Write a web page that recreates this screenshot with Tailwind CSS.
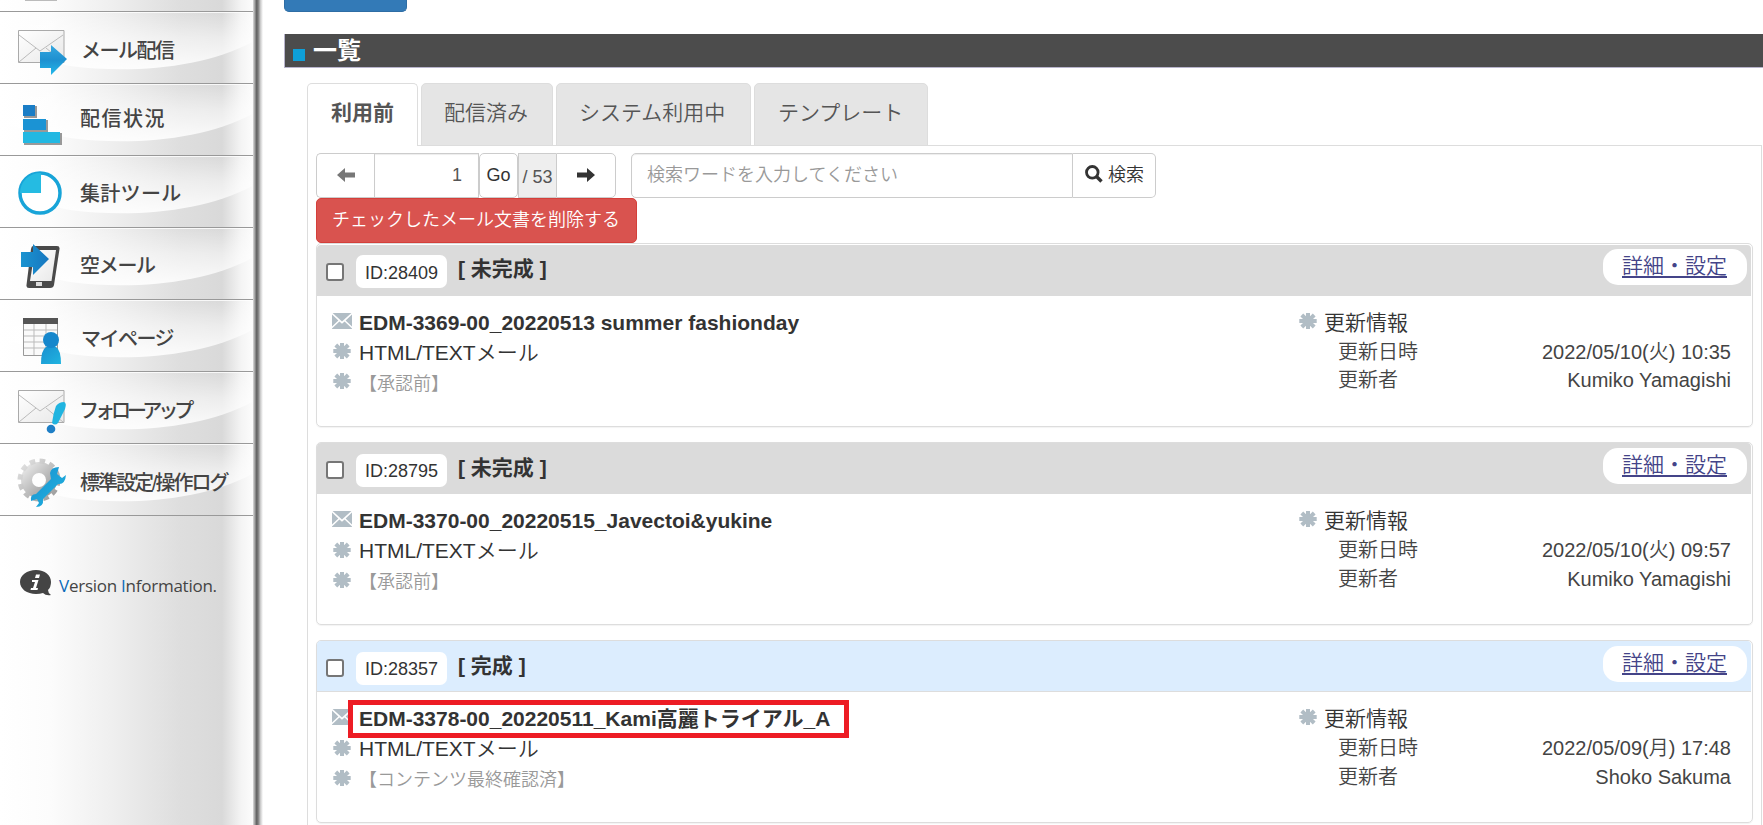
<!DOCTYPE html>
<html lang="ja">
<head>
<meta charset="utf-8">
<title>一覧</title>
<script src="https://cdn.jsdelivr.net/npm/@tailwindcss/browser@4"></script>
</head>
<body class="bg-white text-[#333] font-['Liberation_Sans','Noto_Sans_CJK_JP',sans-serif] overflow-hidden">
<svg width="0" height="0" class="absolute">
  <defs>
    <linearGradient id="blue" x1="0" y1="0" x2="0" y2="1"><stop offset="0" stop-color="#35a8e0"/><stop offset=".5" stop-color="#1e90d0"/><stop offset="1" stop-color="#22b8ea"/></linearGradient>
    <linearGradient id="deep" x1="0" y1="0" x2="1" y2="0"><stop offset="0" stop-color="#1b93d0"/><stop offset="1" stop-color="#1677c0"/></linearGradient>
    <linearGradient id="teal" x1="0" y1="0" x2="1" y2="1"><stop offset="0" stop-color="#1a90d0"/><stop offset="1" stop-color="#20b4e0"/></linearGradient>
    <linearGradient id="paper" x1="0" y1="0" x2="1" y2="1"><stop offset="0" stop-color="#fff"/><stop offset="1" stop-color="#e8e8e8"/></linearGradient>
    <linearGradient id="steel" x1="0" y1="0" x2="1" y2="1"><stop offset="0" stop-color="#e4e4e4"/><stop offset="1" stop-color="#999"/></linearGradient>
    <linearGradient id="glow" x1="0" y1="0" x2="0" y2="1"><stop offset="0" stop-color="#fff" stop-opacity="0"/><stop offset=".45" stop-color="#fff" stop-opacity=".5"/><stop offset="1" stop-color="#fff" stop-opacity=".9"/></linearGradient>
    <symbol id="gloss" viewBox="0 0 252 71"><path d="M0 0H252V30C205 56 130 62 70 54L0 40Z" fill="url(#glow)"/><path d="M0 .5H252" stroke="#fff" stroke-opacity=".8"/></symbol>
    <symbol id="ast" viewBox="0 0 18 16"><g stroke="#b1bdc5" stroke-width="4"><path d="M9 0V16M.3 8H17.700M2.800 2 15.200 14M15.200 2 2.800 14"/></g></symbol>
    <symbol id="env" viewBox="0 0 20 16"><path fill="#b1bdc5" d="M.6 0H19.400L10 8.600ZM0 1.400 6.400 7.400 0 13.600ZM20 1.400 13.600 7.400 20 13.600ZM7.400 8.400 10 10.800 12.600 8.400 20 15.400V16H0V15.400Z"/></symbol>
  </defs>
</svg>
<div class="flex h-[825px] w-[1763px]">
  <aside class="flex h-full w-[270px] shrink-0">
    <div class="h-full w-[253px] bg-[linear-gradient(90deg,#fff_0,#fcfcfc_50px,#eee_115px,#dedede_180px,#d9d9d9_222px,#f4f4f4_241px,#fcfcfc_253px)]">
      <div class="relative h-[12px] border-b border-[#999]"><div class="absolute left-[25px] top-0 h-px w-8 bg-[#bbb]"></div></div>
      <nav class="text-[20px] font-medium text-[#444]">
        <a class="relative flex h-[72px] items-center border-b border-[#999]"><svg class="absolute left-0 top-0" width="252" height="71"><use href="#gloss"/></svg>
          <svg class="relative ml-[16px]" width="54" height="54" viewBox="0 0 54 54"><path d="M2.500 9.500H48V41.500H2.500Z" fill="url(#paper)" stroke="#aaa"/><path d="M3 41 20 27M47 41 30 27M3 14 24 30 47 14" fill="none" stroke="#bbb"/><path d="M24 31H35V24L51 38 35 54V47H24Z" fill="url(#blue)"/></svg>
          <span class="relative top-[3px] ml-[11px] leading-none tracking-[-1.5px]">メール配信</span></a>
        <a class="relative flex h-[72px] items-center border-b border-[#999]"><svg class="absolute left-0 top-0" width="252" height="71"><use href="#gloss"/></svg>
          <svg class="relative ml-[16px]" width="54" height="54" viewBox="0 0 54 54"><g fill="#999"><path d="M8 13H21V25H8ZM8 27H32V39H8ZM8 40H46V52H8Z"/></g><path d="M7 12H19V23H7Z" fill="#1a7dc6"/><path d="M7 26H30V37H7Z" fill="#1b93d4"/><path d="M7 39H44V50H7Z" fill="#22b8e2"/></svg>
          <span class="relative -top-px ml-[10px] leading-none tracking-[1.5px]">配信状況</span></a>
        <a class="relative flex h-[72px] items-center border-b border-[#999]"><svg class="absolute left-0 top-0" width="252" height="71"><use href="#gloss"/></svg>
          <svg class="relative ml-[16px]" width="54" height="54" viewBox="0 0 54 54"><circle cx="24" cy="28" r="20" fill="#fff" stroke="#18a4d8" stroke-width="3.500"/><path d="M25 28V8A20 20 0 0 0 4 28Z" fill="#25bbe2"/></svg>
          <span class="relative top-[2px] ml-[10px] leading-none tracking-[.3px]">集計ツール</span></a>
        <a class="relative flex h-[72px] items-center border-b border-[#999]"><svg class="absolute left-0 top-0" width="252" height="71"><use href="#gloss"/></svg>
          <svg class="relative ml-[16px]" width="54" height="54" viewBox="0 0 54 54"><path d="M17 9H41Q44 9 43.500 12L38 48Q37.500 51 34 51H13Q10 51 10.500 48L15 12Q15.500 9 17 9Z" fill="#4a4a4a"/><path d="M19 13H40L35.500 44H14Z" fill="url(#paper)"/><path d="M20 45H26V49H20Z" fill="#ddd"/><path d="M5 15H17V7L33 22 17 38V30H5Z" fill="url(#deep)"/></svg>
          <span class="relative top-[2px] ml-[10px] leading-none tracking-[-1.3px]">空メール</span></a>
        <a class="relative flex h-[72px] items-center border-b border-[#999]"><svg class="absolute left-0 top-0" width="252" height="71"><use href="#gloss"/></svg>
          <svg class="relative ml-[16px]" width="54" height="56" viewBox="0 0 54 56"><path d="M7.500 10.500H41.500V47.500H7.500Z" fill="#fafafa" stroke="#999"/><path d="M7 10H42V16H7Z" fill="#555"/><path d="M8 22H41M8 28H41M8 34H41M8 40H41M18 16V47M30 16V47" stroke="#bbb"/><path d="M25 56Q25 42 30 39H40Q45 42 45 56Z" fill="url(#teal)"/><circle cx="35" cy="32" r="8" fill="#1687cc"/></svg>
          <span class="relative top-[3px] ml-[11px] leading-none tracking-[-1.5px]">マイページ</span></a>
        <a class="relative flex h-[72px] items-center border-b border-[#999]"><svg class="absolute left-0 top-0" width="252" height="71"><use href="#gloss"/></svg>
          <svg class="relative ml-[16px]" width="54" height="54" viewBox="0 0 54 54"><path d="M2.500 9.500H48V41.500H2.500Z" fill="url(#paper)" stroke="#aaa"/><path d="M3 41 20 27M47 41 30 27M3 14 24 30 47 14" fill="none" stroke="#bbb"/><path d="M40 25Q43 21 48 21 51 22 49 28L42 42Q39 45 36 42Q37 33 40 25Z" fill="#20b4e0"/><circle cx="35" cy="48" r="4.300" fill="#1f7fc6"/></svg>
          <span class="relative top-[3px] ml-[9px] leading-none tracking-[-4px]">フォローアップ</span></a>
        <a class="relative flex h-[72px] items-center border-b border-[#999]"><svg class="absolute left-0 top-0" width="252" height="71"><use href="#gloss"/></svg>
          <svg class="relative ml-[16px]" width="54" height="54" viewBox="0 0 54 54"><circle cx="23" cy="27" r="12.500" fill="none" stroke="url(#steel)" stroke-width="11"/><circle cx="23" cy="27" r="19" fill="none" stroke="url(#steel)" stroke-width="5" stroke-dasharray="5.500 4.450"/><path d="M43 14Q35 14 34 20L35 26 20 41Q14 41 15 48L21 46 23 50 20 54Q28 54 27 46L42 31Q49 32 50 22L46 25 41 21Z" fill="url(#teal)"/></svg>
          <span class="relative top-[3px] ml-[10px] whitespace-nowrap leading-none tracking-[-2px]">標準設定/操作ログ</span></a>
      </nav>
      <div class="flex items-center pt-[53px] pl-[20px]">
        <svg width="32" height="28" viewBox="0 0 32 28"><path d="M16 1C7 1 0 6 0 13S7 25 16 25Q20 25 23 24 26 27 31 26 28 24 28 21 31 18 31 13C31 6 25 1 16 1Z" fill="#444"/><path d="M16 5.500h4l-1 3.500h-4ZM12 11h6.500l-2.500 8h2l-.5 2H10.500l.5-2h2l2-6h-3Z" fill="#fff"/></svg>
        <span class="ml-[7px] mt-[6px] whitespace-nowrap font-['Open_Sans'] text-[17px] font-medium leading-[20px] tracking-[-0.25px] text-[#444]"><span class="text-[#0a6ab8]">V</span>ersion <span class="text-[#0a6ab8]">I</span>nformation.</span>
      </div>
    </div>
    <div class="h-full w-[10px] bg-[linear-gradient(90deg,#ddd,#666_35%,#777_50%,#ccc_75%,#fff)]"></div>
  </aside>
  <main class="ml-[14px] w-[1479px] shrink-0">
    <div class="h-[12px] w-[123px] rounded-b-[5px] border border-t-0 border-[#2e6da4] bg-[#337ab7]"></div>
    <h1 class="mt-[22px] flex h-[34px] items-center border-b border-l border-[#b8b4cc] bg-[#4c4c4c] pl-[8px] text-[24px] font-bold text-white"><span class="mr-[8px] mt-[8px] size-[12px] bg-[#0e9fd8]"></span><span class="relative leading-none">一覧</span></h1>
    <div class="ml-[23px] mt-[15px] w-[1455px]">
      <div class="flex h-[63px] items-stretch gap-[3px] text-[21px] font-[350] leading-[58px] text-[#555]">
        <div class="relative z-10 w-[111px] rounded-t-[5px] border border-b-0 border-[#ddd] bg-white pl-[23px] font-bold">利用前</div>
        <div class="w-[132px] rounded-t-[5px] border border-[#ddd] bg-[#e5e5e5] pl-[22px]">配信済み</div>
        <div class="w-[195px] rounded-t-[5px] border border-[#ddd] bg-[#e5e5e5] pl-[22px]">システム利用中</div>
        <div class="w-[174px] rounded-t-[5px] border border-[#ddd] bg-[#e5e5e5] pl-[23px]">テンプレート</div>
      </div>
      <div class="-mt-px h-[700px] border border-[#ddd] px-[8px] pt-[7px]">
        <div class="flex h-[45px] text-[18px]">
          <div class="flex w-[58px] items-center justify-center rounded-l-[5px] border border-r-0 border-[#ccc]"><svg class="-mt-[2px]" width="18" height="14" viewBox="0 0 18 14"><path d="M0 7 8 0V4.500H18V9.500H8V14Z" fill="#777"/></svg></div>
          <div class="w-[105px] border border-[#ccc] pr-[16px] text-right leading-[43px] text-[#555] shadow-[inset_0_1px_1px_rgba(0,0,0,.075)]">1</div>
          <div class="w-[39px] rounded-[5px] border border-[#ccc] text-center leading-[43px]">Go</div>
          <div class="w-[38px] border border-r-0 border-[#ccc] bg-[#eee] text-center leading-[46px] text-[#555]">/ 53</div>
          <div class="flex w-[60px] items-center justify-center rounded-r-[5px] border border-[#ccc]"><svg class="-mt-[2px]" width="18" height="14" viewBox="0 0 18 14"><path d="M18 7 10 0V4.500H0V9.500H10V14Z" fill="#333"/></svg></div>
          <div class="ml-[15px] w-[442px] rounded-l-[5px] border border-[#ccc] pl-[15px] font-[350] leading-[42px] text-[#999] shadow-[inset_0_1px_1px_rgba(0,0,0,.075)]">検索ワードを入力してください</div>
          <div class="flex w-[83px] items-center rounded-r-[5px] border border-l-0 border-[#ccc] pl-[12px]"><svg class="-mt-[3px]" width="18" height="18" viewBox="0 0 18 18"><circle cx="7.300" cy="7.300" r="5.800" fill="none" stroke="#333" stroke-width="2.800"/><path d="M11.500 11.500 16.500 16.500" stroke="#333" stroke-width="3.400"/></svg><span class="ml-[5px] font-[350]">検索</span></div>
        </div>
        <div class="flex h-[45px] w-[321px] items-center rounded-[5px] border border-[#d43f3a] bg-[#d9534f] pl-[15px] text-[18px] font-[350] text-white">チェックしたメール文書を削除する</div>

        <section class="mb-[15px] h-[184px] w-[1437px] rounded-[5px] border border-[#ddd] shadow-[0_1px_1px_rgba(0,0,0,.05)]">
          <div class="mr-px mt-px flex h-[51px] rounded-t-[4px] bg-[#dbdbdb]">
            <span class="ml-[9px] mt-[18px] size-[18px] rounded-[3px] border-2 border-[#767676] bg-white"></span>
            <span class="ml-[12px] mt-[10px] h-[33px] w-[91px] rounded-[7px] bg-white text-center text-[18px] leading-[36px]">ID:28409</span>
            <b class="ml-[11px] mt-[9px] text-[21px] leading-[30px]">[ 未完成 ]</b>
            <a class="ml-auto mr-[4px] mt-[4px] h-[36px] w-[144px] rounded-[15px] bg-white pl-[19px] text-[21px] font-[350] leading-[34px] text-[#448] underline decoration-2 underline-offset-[3px]">詳細・設定</a>
          </div>
          <div class="flex justify-between pt-[12px]">
            <div class="pl-[15px]">
              <div class="flex h-[30px] items-center"><svg class="-mt-[4px]" width="20" height="16"><use href="#env"/></svg><b class="ml-[7px] text-[21px] leading-[30px]">EDM-3369-00_20220513 summer fashionday</b></div>
              <div class="flex h-[30px] items-center"><svg class="-mt-[4px] ml-px" width="18" height="16"><use href="#ast"/></svg><span class="ml-[8px] text-[21px] font-[350] leading-[28px]">HTML/TEXTメール</span></div>
              <div class="flex h-[30px] items-center"><svg class="-mt-[4px] ml-px" width="18" height="16"><use href="#ast"/></svg><span class="relative top-px ml-[8px] text-[18px] font-[350] leading-[30px] text-[#999]">【承認前】</span></div>
            </div>
            <div class="w-[453px] pr-[21px] text-[20px] font-[350] leading-[29px] text-[#444]">
              <div class="flex h-[30px] items-center text-[21px] text-[#333]"><svg class="-mt-[4px]" width="18" height="16"><use href="#ast"/></svg><span class="relative -top-px ml-[7px]">更新情報</span></div>
              <div class="flex justify-between pl-[39px]"><span>更新日時</span><span>2022/05/10(火) 10:35</span></div>
              <div class="-mt-px flex justify-between pl-[39px]"><span>更新者</span><span>Kumiko Yamagishi</span></div>
            </div>
          </div>
        </section>

        <section class="mb-[15px] h-[183px] w-[1437px] rounded-[5px] border border-[#ddd] shadow-[0_1px_1px_rgba(0,0,0,.05)]">
          <div class="mr-px flex h-[51px] rounded-t-[4px] bg-[#dbdbdb]">
            <span class="ml-[9px] mt-[18px] size-[18px] rounded-[3px] border-2 border-[#767676] bg-white"></span>
            <span class="ml-[12px] mt-[11px] h-[33px] w-[91px] rounded-[7px] bg-white text-center text-[18px] leading-[35px]">ID:28795</span>
            <b class="ml-[11px] mt-[10px] text-[21px] leading-[30px]">[ 未完成 ]</b>
            <a class="ml-auto mr-[4px] mt-[5px] h-[36px] w-[144px] rounded-[15px] bg-white pl-[19px] text-[21px] font-[350] leading-[34px] text-[#448] underline decoration-2 underline-offset-[3px]">詳細・設定</a>
          </div>
          <div class="flex justify-between pt-[12px]">
            <div class="pl-[15px]">
              <div class="flex h-[30px] items-center"><svg class="-mt-[4px]" width="20" height="16"><use href="#env"/></svg><b class="ml-[7px] text-[21px] leading-[30px]">EDM-3370-00_20220515_Javectoi&amp;yukine</b></div>
              <div class="flex h-[30px] items-center"><svg class="-mt-[3px] ml-px" width="18" height="16"><use href="#ast"/></svg><span class="ml-[8px] text-[21px] font-[350] leading-[28px]">HTML/TEXTメール</span></div>
              <div class="flex h-[30px] items-center"><svg class="-mt-[3px] ml-px" width="18" height="16"><use href="#ast"/></svg><span class="relative top-px ml-[8px] text-[18px] font-[350] leading-[30px] text-[#999]">【承認前】</span></div>
            </div>
            <div class="w-[453px] pr-[21px] text-[20px] font-[350] leading-[29px] text-[#444]">
              <div class="flex h-[30px] items-center text-[21px] text-[#333]"><svg class="-mt-[4px]" width="18" height="16"><use href="#ast"/></svg><span class="relative -top-px ml-[7px]">更新情報</span></div>
              <div class="flex justify-between pl-[39px]"><span>更新日時</span><span>2022/05/10(火) 09:57</span></div>
              <div class="flex justify-between pl-[39px]"><span>更新者</span><span>Kumiko Yamagishi</span></div>
            </div>
          </div>
        </section>

        <section class="relative h-[183px] w-[1437px] rounded-[5px] border border-[#ddd] shadow-[0_1px_1px_rgba(0,0,0,.05)]">
          <div class="mr-px flex h-[51px] rounded-t-[4px] border-b border-[#ddd] bg-[#dcedfe]">
            <span class="ml-[9px] mt-[18px] size-[18px] shrink-0 rounded-[3px] border-2 border-[#767676] bg-white"></span>
            <span class="ml-[12px] mt-[11px] h-[33px] w-[91px] rounded-[7px] bg-white text-center text-[18px] leading-[35px]">ID:28357</span>
            <b class="ml-[11px] mt-[10px] text-[21px] leading-[30px]">[ 完成 ]</b>
            <a class="ml-auto mr-[4px] mt-[5px] h-[36px] w-[144px] rounded-[15px] bg-white pl-[19px] text-[21px] font-[350] leading-[34px] text-[#448] underline decoration-2 underline-offset-[3px]">詳細・設定</a>
          </div>
          <div class="flex justify-between pt-[12px]">
            <div class="pl-[15px]">
              <div class="flex h-[30px] items-center"><svg class="-mt-[4px]" width="20" height="16"><use href="#env"/></svg><b class="ml-[7px] text-[21px] leading-[30px]">EDM-3378-00_20220511_Kami高麗トライアル_A</b></div>
              <div class="flex h-[30px] items-center"><svg class="-mt-[3px] ml-px" width="18" height="16"><use href="#ast"/></svg><span class="ml-[8px] text-[21px] font-[350] leading-[28px]">HTML/TEXTメール</span></div>
              <div class="flex h-[30px] items-center"><svg class="-mt-[3px] ml-px" width="18" height="16"><use href="#ast"/></svg><span class="relative top-px ml-[8px] text-[18px] font-[350] leading-[30px] text-[#999]">【コンテンツ最終確認済】</span></div>
            </div>
            <div class="w-[453px] pr-[21px] text-[20px] font-[350] leading-[29px] text-[#444]">
              <div class="flex h-[30px] items-center text-[21px] text-[#333]"><svg class="-mt-[4px]" width="18" height="16"><use href="#ast"/></svg><span class="relative -top-px ml-[7px]">更新情報</span></div>
              <div class="flex justify-between pl-[39px]"><span>更新日時</span><span>2022/05/09(月) 17:48</span></div>
              <div class="flex justify-between pl-[39px]"><span>更新者</span><span>Shoko Sakuma</span></div>
            </div>
          </div>
          <div class="absolute left-[31px] top-[59px] h-[38px] w-[501px] border-[5px] border-[#ed1c24]"></div>
        </section>
      </div>
    </div>
  </main>
</div>
</body>
</html>
